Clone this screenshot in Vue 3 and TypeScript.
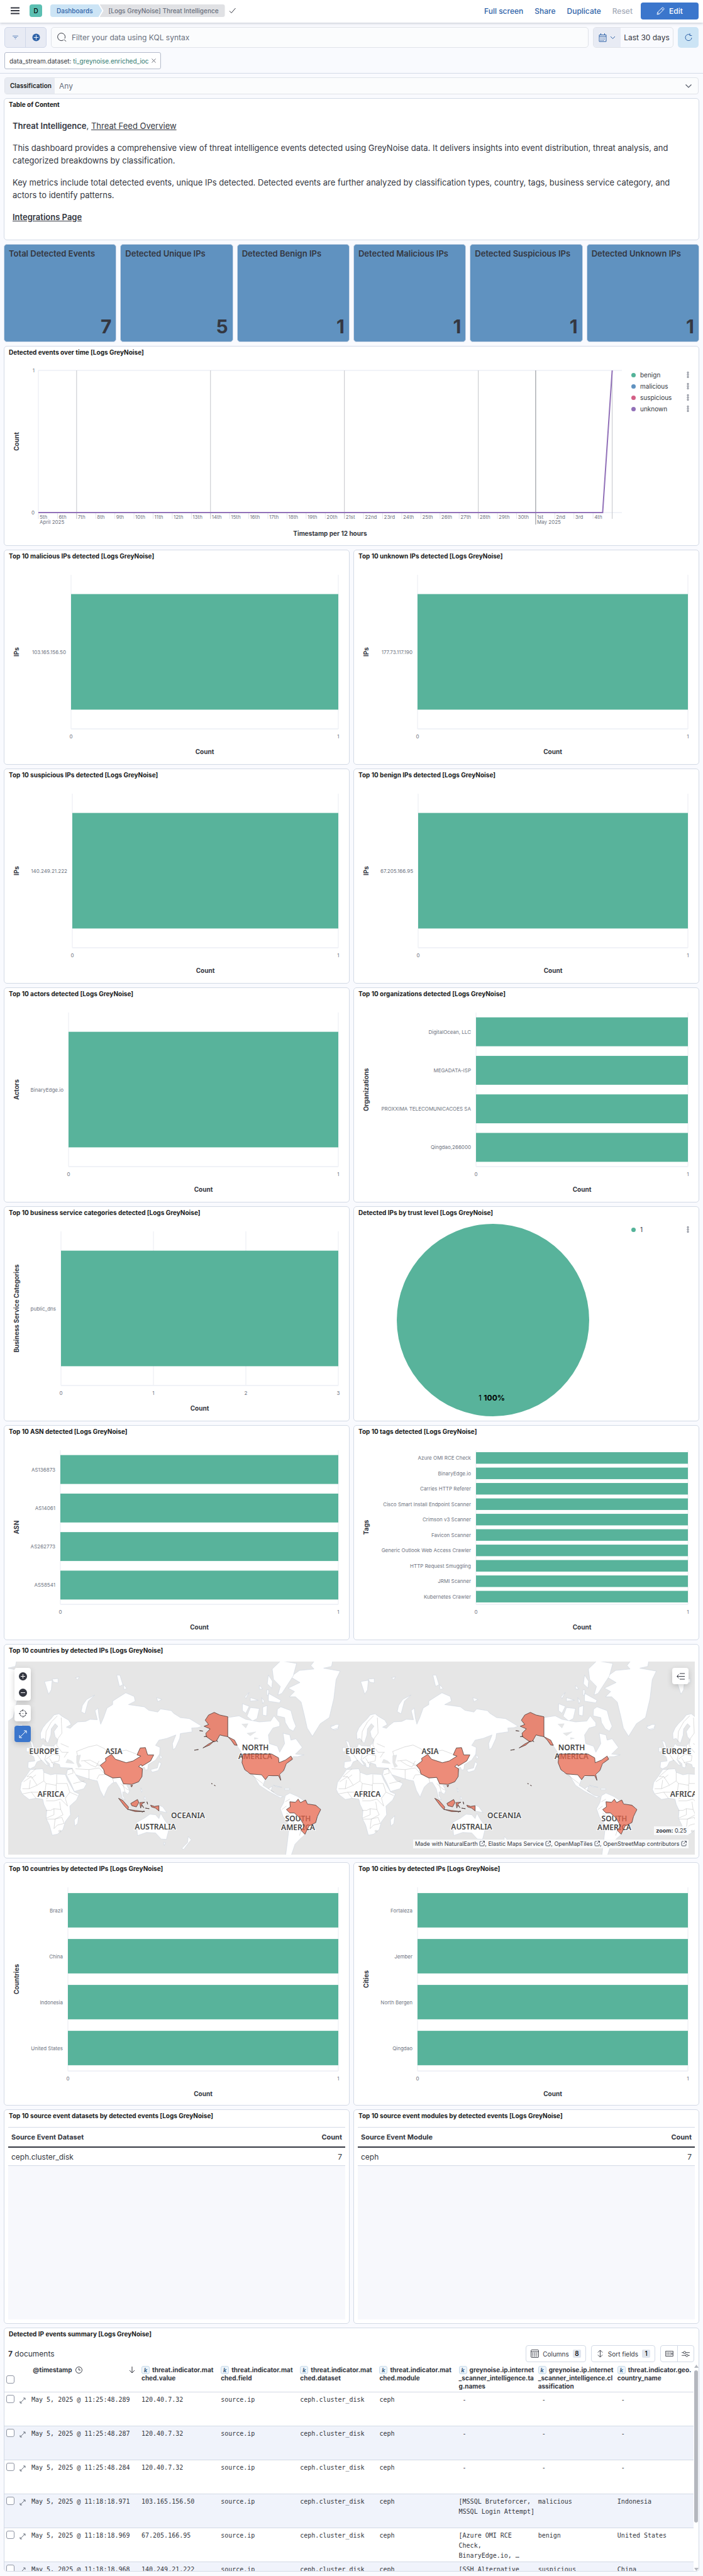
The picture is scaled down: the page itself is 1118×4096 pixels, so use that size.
<script setup lang="ts">
import { ref } from 'vue'

interface Bars {
  kind: 'bars'
  title: string
  axis: string
  left: number
  labels: string[]
  max?: number
  tall?: boolean
}
interface Pie {
  kind: 'pie'
  title: string
}
type Panel = Bars | Pie

const query = ref('')
const classification = ref('Any')

const metrics = [
  { label: 'Total Detected Events', value: 7 },
  { label: 'Detected Unique IPs', value: 5 },
  { label: 'Detected Benign IPs', value: 1 },
  { label: 'Detected Malicious IPs', value: 1 },
  { label: 'Detected Suspicious IPs', value: 1 },
  { label: 'Detected Unknown IPs', value: 1 },
]

const series = [
  { name: 'benign', color: '#54b399' },
  { name: 'malicious', color: '#6092c0' },
  { name: 'suspicious', color: '#d36086' },
  { name: 'unknown', color: '#9170b8' },
]

const suffix = (d: number) => {
  if (d % 10 === 1 && d !== 11) return `${d}st`
  if (d % 10 === 2 && d !== 12) return `${d}nd`
  if (d % 10 === 3 && d !== 13) return `${d}rd`
  return `${d}th`
}
const dayWidth = 30.42
const days = Array.from({ length: 30 }, (_, i) => ({
  x: 55 + i * dayWidth,
  label: suffix(i < 26 ? i + 5 : i - 25),
}))
const weeks = [2, 9, 16, 23].map((i) => 55 + i * dayWidth)
const monthX = 55 + 26 * dayWidth
const endX = 55 + 30 * dayWidth

const upperPanels: Panel[] = [
  { kind: 'bars', title: 'Top 10 malicious IPs detected [Logs GreyNoise]', axis: 'IPs', left: 107, labels: ['103.165.156.50'] },
  { kind: 'bars', title: 'Top 10 unknown IPs detected [Logs GreyNoise]', axis: 'IPs', left: 102, labels: ['177.73.117.190'] },
  { kind: 'bars', title: 'Top 10 suspicious IPs detected [Logs GreyNoise]', axis: 'IPs', left: 109, labels: ['140.249.21.222'] },
  { kind: 'bars', title: 'Top 10 benign IPs detected [Logs GreyNoise]', axis: 'IPs', left: 103, labels: ['67.205.166.95'] },
  { kind: 'bars', title: 'Top 10 actors detected [Logs GreyNoise]', axis: 'Actors', left: 103, labels: ['BinaryEdge.io'] },
  {
    kind: 'bars', title: 'Top 10 organizations detected [Logs GreyNoise]', axis: 'Organizations', left: 195,
    labels: ['DigitalOcean, LLC', 'MEGADATA-ISP', 'PROXXIMA TELECOMUNICACOES SA', 'Qingdao,266000'],
  },
  { kind: 'bars', title: 'Top 10 business service categories detected [Logs GreyNoise]', axis: 'Business Service Categories', left: 91, labels: ['public_dns'], max: 3 },
  { kind: 'pie', title: 'Detected IPs by trust level [Logs GreyNoise]' },
  { kind: 'bars', title: 'Top 10 ASN detected [Logs GreyNoise]', axis: 'ASN', left: 90, labels: ['AS136873', 'AS14061', 'AS262773', 'AS58541'] },
  {
    kind: 'bars', title: 'Top 10 tags detected [Logs GreyNoise]', axis: 'Tags', left: 195,
    labels: ['Azure OMI RCE Check', 'BinaryEdge.io', 'Carries HTTP Referer', 'Cisco Smart Install Endpoint Scanner', 'Crimson v3 Scanner', 'Favicon Scanner', 'Generic Outlook Web Access Crawler', 'HTTP Request Smuggling', 'JRMI Scanner', 'Kubernetes Crawler'],
  },
]
const placePanels: Bars[] = [
  { kind: 'bars', title: 'Top 10 countries by detected IPs [Logs GreyNoise]', axis: 'Countries', left: 102, labels: ['Brazil', 'China', 'Indonesia', 'United States'], tall: true },
  { kind: 'bars', title: 'Top 10 cities by detected IPs [Logs GreyNoise]', axis: 'Cities', left: 102, labels: ['Fortaleza', 'Jember', 'North Bergen', 'Qingdao'], tall: true },
]
const groups: Panel[][] = [upperPanels, placePanels]

const plotTop = 40
const plotRight = 532
const plotBottom = (p: Bars) => (p.tall ? 332 : 285)
const band = (p: Bars) => (plotBottom(p) - plotTop) / p.labels.length
const midY = (p: Bars) => (plotTop + plotBottom(p)) / 2
const ticks = (p: Bars) => {
  const max = p.max ?? 1
  return Array.from({ length: max + 1 }, (_, i) => ({ value: i, x: p.left + ((plotRight - p.left) * i) / max }))
}

const mapWidth = 1092
const worldCopies = [-1401, 0, 1401, 2802]
const labelCopies = [-503, 0, 503, 1006]
const places = [
  { x: 57, y: 142, name: 'EUROPE' },
  { x: 168, y: 142, name: 'ASIA' },
  { x: 68, y: 210, name: 'AFRICA' },
  { x: 393, y: 136, name: 'NORTH' },
  { x: 393, y: 150, name: 'AMERICA' },
  { x: 286, y: 244, name: 'OCEANIA' },
  { x: 234, y: 262, name: 'AUSTRALIA' },
  { x: 461, y: 249, name: 'SOUTH' },
  { x: 461, y: 263, name: 'AMERICA' },
]
const mapLabels = labelCopies
  .flatMap((dx) => places.map((p) => ({ ...p, x: p.x + dx })))
  .filter((p) => p.x > 0 && p.x < mapWidth)
const credits = ['Made with NaturalEarth', 'Elastic Maps Service', 'OpenMapTiles', 'OpenStreetMap contributors']

const sources = [
  { title: 'Top 10 source event datasets by detected events [Logs GreyNoise]', head: 'Source Event Dataset', name: 'ceph.cluster_disk' },
  { title: 'Top 10 source event modules by detected events [Logs GreyNoise]', head: 'Source Event Module', name: 'ceph' },
]

const columns = [
  ['threat.indicator.mat', 'ched.value'],
  ['threat.indicator.mat', 'ched.field'],
  ['threat.indicator.mat', 'ched.dataset'],
  ['threat.indicator.mat', 'ched.module'],
  ['greynoise.ip.internet', '_scanner_intelligence.ta', 'g.names'],
  ['greynoise.ip.internet', '_scanner_intelligence.cl', 'assification'],
  ['threat.indicator.geo.', 'country_name'],
]
const dash = '\u00a0-'
const events = [
  { time: '11:25:48.289', ip: '120.40.7.32', tags: dash, kind: dash, country: dash },
  { time: '11:25:48.287', ip: '120.40.7.32', tags: dash, kind: dash, country: dash },
  { time: '11:25:48.284', ip: '120.40.7.32', tags: dash, kind: dash, country: dash },
  { time: '11:18:18.971', ip: '103.165.156.50', tags: '[MSSQL Bruteforcer,\nMSSQL Login Attempt]', kind: 'malicious', country: 'Indonesia' },
  { time: '11:18:18.969', ip: '67.205.166.95', tags: '[Azure OMI RCE\nCheck,\nBinaryEdge.io, …', kind: 'benign', country: 'United States' },
  { time: '11:18:18.968', ip: '140.249.21.222', tags: '[SSH Alternative', kind: 'suspicious', country: 'China' },
]
</script>

<template>
  <div class="page">
    <header class="top">
      <button class="icon-btn" aria-label="Menu">
        <svg width="14" height="12" viewBox="0 0 14 12"><path d="M0 1.5h14M0 6h14M0 10.5h14" stroke="#343741" stroke-width="1.8" /></svg>
      </button>
      <span class="space">D</span>
      <nav class="crumbs">
        <a href="#" class="crumb first">Dashboards</a>
        <span class="crumb last">[Logs GreyNoise] Threat Intelligence</span>
      </nav>
      <svg class="check" width="12" height="12" viewBox="0 0 12 12"><path d="M1 6.5 4 9.5 10.5 2" fill="none" stroke="#343741" /></svg>
      <div class="actions">
        <a href="#">Full screen</a>
        <a href="#">Share</a>
        <a href="#">Duplicate</a>
        <button class="reset" disabled>Reset</button>
        <button class="edit">
          <svg width="13" height="13" viewBox="0 0 13 13"><path d="M1 12l.8-3.4L9.2 1.2a1 1 0 0 1 1.4 0l1.2 1.2a1 1 0 0 1 0 1.4L4.4 11.2zM8 2.5 10.5 5M2 8.6l2.4 2.4" fill="none" stroke="#fff" /></svg>
          Edit
        </button>
      </div>
    </header>

    <section class="query">
      <div class="query-row">
        <div class="filter-group">
          <button aria-label="Filter menu"><svg width="9" height="7" viewBox="0 0 12 8"><path d="M0 1h12M3 4h6M5 7h2" stroke="#2f63a8" /></svg></button>
          <button aria-label="Add filter"><svg width="13" height="13" viewBox="0 0 14 14"><circle cx="7" cy="7" r="6.5" fill="#2f63a8" /><path d="M3 7h8M7 3v8" stroke="#fff" /></svg></button>
        </div>
        <label class="search">
          <svg width="15" height="15" viewBox="0 0 15 15"><path d="M10 11.6A6 6 0 1 1 12 9.3M11 10.8l3 3" fill="none" stroke="#343741" /></svg>
          <input v-model="query" type="text" aria-label="KQL query" placeholder="Filter your data using KQL syntax" />
        </label>
        <div class="dates">
          <button class="quick" aria-label="Date quick select">
            <svg width="13" height="14" viewBox="0 0 13 14" fill="none" stroke="#2f63a8"><path d="M1 2.5h11v10.5H1zM1 5h11M3.5 0v3M9.500 0v3" /><path d="M3 7.500h7M3 9.500h7M3 11.500h5" stroke-dasharray="1 1" /></svg>
            <svg width="9" height="6" viewBox="0 0 9 6"><path d="M1 1l3.500 3.500L8 1" fill="none" stroke="#2f63a8" /></svg>
          </button>
          <button class="range">Last 30 days</button>
        </div>
        <button class="refresh" aria-label="Refresh"><svg width="12" height="13" viewBox="0 0 12 13"><path d="M8.500 2.300A5 5 0 1 0 11 7M8 .2v3.300h3.300" fill="none" stroke="#2f63a8" /></svg></button>
      </div>
      <div class="pill">
        <span>data_stream.dataset: <b>ti_greynoise.enriched_ioc</b></span>
        <button class="icon-btn" aria-label="Remove filter"><svg width="7" height="7" viewBox="0 0 8 8"><path d="M.5.5l7 7M7.500.5l-7 7" stroke="#535966" /></svg></button>
      </div>
    </section>

    <main class="board">
      <div class="control">
        <label for="classification">Classification</label>
        <select id="classification" v-model="classification"><option>Any</option></select>
        <svg width="12" height="8" viewBox="0 0 12 8"><path d="M1.500 1.500 6 6l4.500-4.500" fill="none" stroke="#535966" stroke-width="1.200" /></svg>
      </div>

      <section class="panel intro">
        <h2>Table of Content</h2>
        <div class="markdown">
          <p><strong>Threat Intelligence</strong>, <a href="#">Threat Feed Overview</a></p>
          <p>This dashboard provides a comprehensive view of threat intelligence events detected using GreyNoise data. It delivers insights into event distribution, threat analysis, and categorized breakdowns by classification.</p>
          <p>Key metrics include total detected events, unique IPs detected. Detected events are further analyzed by classification types, country, tags, business service category, and actors to identify patterns.</p>
          <p><a href="#"><strong>Integrations Page</strong></a></p>
        </div>
      </section>

      <div class="metrics">
        <section v-for="m in metrics" :key="m.label" class="metric">
          <h3>{{ m.label }}</h3>
          <span>{{ m.value }}</span>
        </section>
      </div>

      <section class="panel timeline">
        <h2>Detected events over time [Logs GreyNoise]</h2>
        <div class="split">
          <svg class="chart" viewBox="1 28 990 289">
            <path d="M55 39H983M55 265H983" stroke="#f1f3f8" stroke-width="2" />
            <path d="M55 39V265" stroke="#e6e9f1" />
            <path v-for="d in days" :key="d.x" :d="`M${d.x} 265v10`" stroke="#e1e4ec" />
            <path v-for="w in weeks" :key="w" :d="`M${w} 39V275`" stroke="#c3c5ca" />
            <path :d="`M${monthX} 39V284`" stroke="#84878f" />
            <path :d="`M${endX} 39V275`" stroke="#c3c5ca" />
            <path :d="`M55 265H${endX - dayWidth / 2}L${endX} 39`" fill="none" stroke="#9170b8" stroke-width="2" />
            <g class="tick">
              <text x="49" y="39" text-anchor="end">1</text>
              <text x="49" y="265" text-anchor="end">0</text>
              <text v-for="d in days" :key="d.label" :x="d.x + 2" y="272">{{ d.label }}</text>
              <text x="57" y="280">April 2025</text>
              <text :x="monthX + 2" y="280">May 2025</text>
            </g>
            <text class="axis" x="519" y="298">Timestamp per 12 hours</text>
            <text class="axis" transform="translate(20 152) rotate(-90)">Count</text>
          </svg>
          <ul class="legend">
            <li v-for="s in series" :key="s.name">
              <i :style="{ background: s.color }"></i><span>{{ s.name }}</span>
              <button class="icon-btn" :aria-label="`Options for ${s.name}`"><svg width="4" height="10" viewBox="0 0 4 10"><path d="M1 .5h2v2H1zM1 4h2v2H1zM1 7.500h2v2H1z" fill="none" stroke="#69707d" stroke-width=".8" /></svg></button>
            </li>
          </ul>
        </div>
      </section>

      <template v-for="(group, g) in groups" :key="g">
        <section v-if="g === 1" class="panel map-panel">
          <h2>Top 10 countries by detected IPs [Logs GreyNoise]</h2>
          <div class="map">
            <svg :viewBox="`0 0 ${mapWidth} 307`">
              <defs>
                <g id="land" stroke-linejoin="round">
                  <g fill="#fff" stroke="#ccd4df" stroke-width="2">
                    <path d="M180 530 190 500 205 475 225 450 240 425 262 418 275 432 305 455 316 480 295 495 312 502 325 485 345 465 380 462 400 450 432 452 422 400 435 385 440 440 447 478 460 440 475 385 500 365 500 345 530 320 558 297 595 318 600 345 570 365 640 378 660 398 700 408 712 390 760 400 770 415 800 440 840 446 868 468 895 490 878 498 850 500 852 522 800 532 797 560 778 615 768 625 765 590 780 540 740 560 705 570 690 600 710 612 708 650 690 685 658 710 655 740 645 742 640 725 625 735 632 775 615 808 585 828 562 830 576 860 568 882 555 870 545 868 545 890 556 915 543 905 533 850 515 812 498 818 480 840 465 885 462 900 445 860 432 805 412 800 385 790 350 775 335 768 355 802 385 820 372 850 330 866 315 820 295 770 300 740 322 732 300 730 268 728 264 710 240 700 235 730 222 725 220 705 198 680 216 718 205 712 185 685 165 695 155 722 135 735 124 728 126 695 155 690 150 665 135 655 165 640 180 615 190 590 200 602 235 605 250 590 255 565 245 550 240 520 257 490 245 475 228 505 226 540 214 588 204 575 195 560 181 565Z" />
                    <path d="M135 740 190 735 195 755 225 770 245 765 290 768 300 800 330 868 352 880 340 915 310 950 313 1000 290 1040 280 1085 255 1112 232 1118 220 1060 205 1020 208 975 195 940 190 910 160 905 130 912 100 882 90 855 95 815 115 780Z" />
                    <path d="M330 1030 349 1006 345 1050 332 1065ZM132 572 145 580 158 640 135 650 142 610ZM118 612h12v25h-12ZM88 480h14l-5 20-22 8-12-12ZM1467 485 1500 488 1500 505 1480 512Z" />
                    <path d="M1278 270 1330 238 1288 205 1328 168 1392 160 1378 140 1395 112H1475L1470 145 1435 155 1508 172 1490 220 1480 330 1460 440 1420 475 1385 548 1362 500 1350 430 1335 350 1310 320 1283 320 1306 290Z" />
                    <path d="M1245 112 1315 128 1300 200 1250 300 1232 310 1243 260 1213 220 1207 160ZM1190 195 1208 230 1205 270 1185 245ZM1075 360 1105 375 1090 415 1075 400ZM1110 382 1150 388 1140 445 1120 460 1095 432ZM1165 380 1185 370 1182 430 1165 425ZM1190 300 1245 340 1240 355 1190 345ZM1105 295 1090 330 1086 320ZM1110 325 1145 340 1110 345ZM1160 325 1172 345 1165 360ZM1150 255 1165 275 1150 275ZM1183 280h8v30h-8ZM1245 378 1290 400 1300 450 1312 490 1300 518 1282 505 1265 468 1262 440 1228 430 1230 392Z" />
                    <path d="M1010 440 1060 430 1090 450 1150 465 1200 460 1215 430 1240 470 1240 490 1210 500 1190 540 1195 590 1230 605 1240 640 1262 590 1255 530 1285 540 1290 570 1312 562 1340 612 1310 650 1348 655 1320 665 1300 665 1280 692 1262 740 1246 770 1245 802 1232 775 1180 785 1166 830 1190 850 1208 835 1202 862 1232 888 1256 895 1243 902 1190 865 1150 830 1120 765 1095 760 1075 710 1075 650 1050 600 1010 550ZM1212 830 1250 842 1225 838ZM1262 848h22v8h-22Z" />
                    <path d="M1265 890 1285 875 1320 895 1360 930 1420 960 1420 985 1405 1020 1395 1050 1352 1115 1330 1140 1308 1170 1290 1240H1266L1275 1150 1283 1060 1255 1010 1243 965 1258 930Z" />
                    <path d="M605 1045 640 1020 665 997 690 1000 705 1022 713 992 730 1030 752 1070 738 1142 715 1140 690 1105 650 1102 610 1120ZM725 1160h8l-4 18ZM835 1125 848 1145 835 1165 815 1200 806 1195 832 1160ZM705 945 722 955 740 988 705 978Z" />
                    <path d="M708 655 720 668 712 680ZM705 695 715 705 702 745 675 755 668 740 698 730ZM625 845 632 860 628 870ZM640 895 648 905 640 915ZM360 405 366 370 385 335 421 310 392 345 377 418ZM198 232 232 225 228 280 216 305ZM232 218 258 215 258 240 238 235ZM518 195 532 195 545 250 530 260ZM548 250 563 272 550 278ZM695 325 718 335 700 348ZM335 210 352 205 345 222Z" />
                  </g>
                  <g fill="#e6e6e6" stroke="#ccd4df">
                    <path d="M292 700 300 680 318 690 330 705ZM340 660 358 655 350 700 362 720 348 728 340 700ZM1072 478 1100 475 1090 500ZM1095 530 1135 522 1110 545ZM1128 555 1145 560 1128 565Z" />
                  </g>
                  <path fill="none" stroke="#b5b5b5" stroke-width="1.500" d="M202 580 205 520 228 465 255 430M272 440 275 530 258 560M258 560 252 600 275 640 305 640M185 640 205 650 200 680M160 640 185 690M205 650 240 625 240 600M205 680 235 650 265 660 262 690 228 700M240 625 265 650M220 675 240 715M300 640 285 670M340 635 345 660M340 635 390 610 430 598 465 620 475 640 495 652 530 635 560 628 605 650M360 690 400 685 445 715M375 690 405 715 425 725 440 690M430 715 445 720M395 740 440 730 465 765M335 735 395 740 395 795M430 795 440 770 470 768 500 790 535 785M500 790 505 815M535 820 560 850 575 860M320 732 335 765M300 770 325 760 320 735M325 820 375 805M300 740 320 735M120 780 160 735M105 810 140 780 165 830 195 805 195 755M140 780 120 780M252 768V820H298M195 805 205 820 250 830M100 850 130 850 135 800M130 850 165 830M100 880 140 870 160 905M140 870 195 870 200 900M250 820 250 860 205 910M205 820 200 870M250 860 290 900M298 820 310 870 345 890M310 870 290 905 300 950M205 920 240 920 270 910 300 950M205 975 225 975 240 965 240 1000 205 1020M240 965 270 970 265 925M270 970 280 1000 245 1025 240 1080M208 1025 245 1025M245 1025 275 1015 285 1050 255 1060 240 1080M262 1090h8v8h-8ZM160 770 140 790M1110 765 1165 820M1190 850 1215 870M1265 925 1285 910M1250 970 1270 950M1270 990 1310 1030 1300 1050 1330 1080M1283 1060 1290 1050M1335 1090 1328 1120M545 820 555 870M270 590 305 610" />
                </g>
                <g id="matches" fill="#e7664c" fill-opacity=".75" stroke="#4d3a36" stroke-width="2.500" stroke-linejoin="round">
                  <path d="M950 410 975 425 1010 435V550L990 545 975 540 960 575 948 580 915 550 913 530 932 505 905 490 925 480 910 455 925 425Z" />
                  <path d="M950 575 930 598 900 615 925 592ZM885 515 900 518ZM862 628 880 624ZM905 550 918 548ZM1010 550 1040 570 1052 600 1040 598 1025 570ZM960 570 965 580ZM950 828 955 835ZM937 820 942 822Z" />
                  <path d="M445 715 470 690 468 675 495 652 512 680 560 700 590 690 625 662 608 655 622 615 645 613 655 655 682 655 668 690 630 720 626 710 615 722 632 735 630 780 615 810 585 825 548 822 535 785 500 788 465 765 460 740ZM580 832 588 830 584 840Z" />
                  <path d="M1077 650H1205L1235 672 1237 700 1265 685 1290 662 1297 680 1270 705 1258 745 1240 768 1245 802 1235 775 1190 775 1177 798 1160 770 1110 765 1085 740 1073 700Z" />
                  <path d="M1285 925 1310 928 1322 910 1332 930 1355 915 1363 938 1400 945 1422 970 1407 1010 1400 1045 1370 1065 1352 1113 1335 1090 1350 1065 1330 1020 1305 990 1285 990 1270 970 1287 955Z" />
                  <path d="M526 905 545 918 570 955 568 972 552 950ZM570 970 600 975 642 982 600 982ZM580 935 610 912 616 930 605 955 585 948ZM620 930 642 928 628 938 638 960 628 945 624 962ZM668 945 685 952 705 948V978L690 962 672 955ZM652 925 655 940ZM645 962 662 965ZM630 985 640 978Z" />
                </g>
              </defs>
              <rect :width="mapWidth" height="308" fill="#e6e6e6" />
              <g transform="scale(.3589 .2758) translate(-37 -117)">
                <use v-for="c in worldCopies" :key="c" href="#land" :x="c" />
              </g>
              <g class="place">
                <text v-for="(p, i) in mapLabels" :key="i" :x="p.x" :y="p.y">{{ p.name }}</text>
              </g>
              <g transform="scale(.3589 .2758) translate(-37 -117)">
                <use v-for="c in worldCopies" :key="c" href="#matches" :x="c" />
              </g>
            </svg>
            <div class="map-tools">
              <div class="tool-card">
                <button aria-label="Zoom in"><svg width="13" height="13" viewBox="0 0 13 13"><circle cx="6.500" cy="6.500" r="6.500" fill="#343741" /><path d="M3 6.500h7M6.500 3v7" stroke="#fff" /></svg></button>
                <button aria-label="Zoom out"><svg width="13" height="13" viewBox="0 0 13 13"><circle cx="6.500" cy="6.500" r="6.500" fill="#343741" /><path d="M3 6.500h7" stroke="#fff" /></svg></button>
              </div>
              <div class="tool-card">
                <button aria-label="Fit to data"><svg width="13" height="13" viewBox="0 0 13 13"><circle cx="6.500" cy="6.500" r="5" fill="none" stroke="#343741" stroke-dasharray="5 2.850" stroke-dashoffset="-1.500" /><path d="M6.500 0v3M6.500 10v3M0 6.500h3M10 6.500h3M6 6.500h1" stroke="#343741" /></svg></button>
              </div>
              <div class="tool-card primary">
                <button aria-label="Tools"><svg width="13" height="13" viewBox="0 0 13 13"><path d="M1 12 12 1M8 1h4v4M1 8v4h4" fill="none" stroke="#fff" /></svg></button>
              </div>
            </div>
            <div class="tool-card layers">
              <button aria-label="Expand layers panel"><svg width="13" height="11" viewBox="0 0 13 11"><path d="M5 1h8M1 5.500h12M5 10h8M3.500 2.500l-3 3 3 3" fill="none" stroke="#343741" /></svg></button>
            </div>
            <div class="map-notes">
              <span class="zoom"><strong>zoom:</strong> 0.25</span>
              <span class="credit">
                <template v-for="(c, i) in credits" :key="c"><a href="#">{{ c }} <svg width="9" height="9" viewBox="0 0 9 9"><path d="M4 1H2a1 1 0 0 0-1 1v5a1 1 0 0 0 1 1h5a1 1 0 0 0 1-1V5M5.500.5h3v3M8.500.5 4 5" fill="none" stroke="#535966" /></svg></a><template v-if="i < 3">, </template></template>
              </span>
            </div>
          </div>
        </section>

        <div class="pair">
          <section v-for="p in group" :key="p.title" class="panel">
            <h2>{{ p.title }}</h2>
            <svg v-if="p.kind === 'bars'" class="chart" :viewBox="`1 28 548 ${p.tall ? 358 : 313}`">
              <path v-for="t in ticks(p)" :key="t.value" :d="`M${t.x} ${plotTop}V${plotBottom(p)}`" stroke="#e9ebf2" />
              <path :d="`M${p.left} ${plotBottom(p)}H${plotRight}`" stroke="#f0f2f7" stroke-width="2" />
              <rect
                v-for="(l, i) in p.labels" :key="l" :x="p.left" :y="plotTop + band(p) * (i + 0.125)"
                :width="plotRight - p.left" :height="band(p) * 0.75" fill="#58b39b"
              />
              <g class="tick">
                <text v-for="(l, i) in p.labels" :key="l" :x="p.left - 8" :y="plotTop + band(p) * (i + 0.5)" text-anchor="end">{{ l }}</text>
                <text v-for="t in ticks(p)" :key="t.value" :x="t.x" :y="plotBottom(p) + 12" text-anchor="middle">{{ t.value }}</text>
              </g>
              <text class="axis" :x="(p.left + plotRight) / 2" :y="plotBottom(p) + 36">Count</text>
              <text class="axis" :transform="`translate(20 ${midY(p)}) rotate(-90)`">{{ p.axis }}</text>
            </svg>
            <div v-else class="split">
              <svg class="chart" viewBox="1 28 434 313">
                <circle cx="222" cy="181" r="153" fill="#58b39b" />
                <text class="slice" x="220" y="304">1 <tspan font-weight="700">100%</tspan></text>
              </svg>
              <ul class="legend compact">
                <li>
                  <i></i><span>1</span>
                  <button class="icon-btn" aria-label="Options for 1"><svg width="4" height="10" viewBox="0 0 4 10"><path d="M1 .5h2v2H1zM1 4h2v2H1zM1 7.500h2v2H1z" fill="none" stroke="#69707d" stroke-width=".8" /></svg></button>
                </li>
              </ul>
            </div>
          </section>
        </div>
      </template>

      <div class="pair">
        <section v-for="s in sources" :key="s.head" class="panel source">
          <h2>{{ s.title }}</h2>
          <div class="sheet">
            <table>
              <thead><tr><th>{{ s.head }}</th><th class="num">Count</th></tr></thead>
              <tbody><tr><td>{{ s.name }}</td><td class="num">7</td></tr></tbody>
            </table>
          </div>
        </section>
      </div>

      <section class="panel summary">
        <h2>Detected IP events summary [Logs GreyNoise]</h2>
        <div class="toolbar">
          <p><strong>7</strong> documents</p>
          <button>
            <svg width="13" height="13" viewBox="0 0 14 14" fill="none" stroke="#343741"><rect x=".5" y=".5" width="13" height="13" rx="1.500" /><path d="M0 3.500h14" /><path d="M2 6h10M2 8.500h10M2 11h10" stroke-dasharray="2.500 1" /></svg>
            Columns <em>8</em>
          </button>
          <button>
            <svg width="13" height="13" viewBox="0 0 14 14" fill="none" stroke="#343741"><path d="M7 1.500v11M3 5l4-4 4 4M3 9l4 4 4-4" /></svg>
            Sort fields <em>1</em>
          </button>
          <div class="btn-pair">
            <button aria-label="Keyboard shortcuts"><svg width="13" height="9" viewBox="0 0 14 10" fill="none" stroke="#343741"><path d="M.5.5h13v9H.5z" /><path d="M2 3h8M2 5h8M2 7h8" stroke-dasharray="1 .7" /><path d="M11.500 3v4" stroke-width="1.500" /></svg></button>
            <button aria-label="Display options"><svg width="13" height="10" viewBox="0 0 14 11" fill="none" stroke="#343741"><path d="M0 3h3M7 3h7M0 8h7M11 8h3" /><circle cx="5" cy="3" r="2" /><circle cx="9" cy="8" r="2" /></svg></button>
          </div>
        </div>
        <div class="grid-wrap">
          <table class="grid">
            <colgroup><col class="c-check" /><col class="c-open" /><col class="c-time" /><col v-for="(c, i) in columns" :key="i" /></colgroup>
            <thead>
              <tr>
                <th class="pick"><input type="checkbox" aria-label="Select all rows" /></th>
                <th></th>
                <th>
                  <div class="time-head">
                    @timestamp
                    <svg width="11" height="11" viewBox="0 0 11 11"><circle cx="5.500" cy="5.500" r="5" fill="none" stroke="#343741" /><path d="M5.500 2.500v3h2.500" fill="none" stroke="#343741" /></svg>
                    <svg class="sorted" width="10" height="11" viewBox="0 0 10 11"><path d="M5 0v10M1 6l4 4 4-4" fill="none" stroke="#343741" /></svg>
                  </div>
                </th>
                <th v-for="(c, i) in columns" :key="i"><kbd>k</kbd><template v-for="(line, n) in c" :key="n"><br v-if="n" />{{ line }}</template></th>
              </tr>
            </thead>
            <tbody>
              <tr v-for="e in events" :key="e.time">
                <td class="pick"><input type="checkbox" :aria-label="`Select row ${e.time}`" /></td>
                <td class="open"><button class="icon-btn" aria-label="Open row"><svg width="10" height="10" viewBox="0 0 10 10"><path d="M1 9l8-8M6 1h3v3M1 6v3h3" fill="none" stroke="#69707d" /></svg></button></td>
                <td>May 5, 2025 @ {{ e.time }}</td>
                <td>{{ e.ip }}</td>
                <td>source.ip</td>
                <td>ceph.cluster_disk</td>
                <td>ceph</td>
                <td>{{ e.tags }}</td>
                <td>{{ e.kind }}</td>
                <td>{{ e.country }}</td>
              </tr>
            </tbody>
          </table>
          <div class="scroll"><svg width="7" height="5" viewBox="0 0 7 5"><path d="M0 5 3.500 0 7 5z" fill="#b4b7be" /></svg><i></i><svg class="down" width="7" height="5" viewBox="0 0 7 5"><path d="M0 0 3.500 5 7 0z" fill="#b4b7be" /></svg></div>
        </div>
      </section>
    </main>
  </div>
</template>

<style>
body {
  background: #f9fafe;
}
</style>

<style scoped>
* {
  box-sizing: border-box;
}
.page {
  font-family: Inter, "Noto Sans", sans-serif;
  font-size: 12px;
  color: #343741;
}
button {
  font: inherit;
  color: inherit;
  padding: 0;
  border: 0;
  background: none;
  display: flex;
  align-items: center;
  justify-content: center;
}
a {
  color: inherit;
}
svg {
  display: block;
  flex: none;
}
h2, h3, p, ul {
  margin: 0;
  padding: 0;
}

.top {
  display: flex;
  align-items: center;
  height: 36px;
  padding: 0 7px 2px 17px;
  background: #fff;
  box-shadow: 0 1px 4px rgba(60, 70, 90, 0.3);
}
.space {
  width: 20px;
  height: 20px;
  margin: 0 13px 0 16px;
  border-radius: 4px;
  background: #5bbfb2;
  color: #000;
  font-size: 10px;
  font-weight: 500;
  line-height: 20px;
  text-align: center;
}
.crumbs {
  display: flex;
}
.crumb {
  height: 20px;
  font-size: 10px;
  line-height: 20px;
  font-weight: 500;
  text-decoration: none;
}
.crumb.first {
  padding: 0 15px 0 10px;
  background: #cce4f5;
  color: #2f63a8;
  border-radius: 4px 0 0 4px;
  clip-path: polygon(0 0, calc(100% - 6px) 0, 100% 50%, calc(100% - 6px) 100%, 0 100%);
}
.crumb.last {
  margin-left: -4px;
  padding: 0 10px 0 14px;
  background: #e0e1e4;
  color: #6a707d;
  border-radius: 0 4px 4px 0;
  clip-path: polygon(0 0, 100% 0, 100% 100%, 0 100%, 6px 50%);
}
.check {
  margin-left: 6px;
}
.actions {
  display: flex;
  align-items: center;
  gap: 18px;
  margin-left: auto;
  font-weight: 500;
  color: #2f63a8;
}
.actions a {
  text-decoration: none;
}
.reset {
  color: #a5abb8;
}
.edit {
  gap: 7px;
  width: 92px;
  height: 27px;
  margin-left: -5px;
  border-radius: 4px;
  background: #3b76cc;
  color: #fff;
}

.query {
  padding: 7px 7px 6px;
  border-bottom: 1px solid #d3dae6;
}
.query-row {
  display: flex;
  gap: 7px;
  height: 33px;
}
.filter-group {
  display: flex;
  width: 67px;
  border: 1px solid #d0d7e9;
  border-radius: 5px;
  background: #e8ebf4;
}
.filter-group button {
  flex: 1;
}
.filter-group button + button {
  border-left: 1px solid #d0d7e9;
}
.search {
  display: flex;
  align-items: center;
  flex: 1;
  gap: 8px;
  padding-left: 9px;
  border: 1px solid #e0e3e9;
  border-radius: 5px;
  background: #fbfcfd;
}
.search input {
  flex: 1;
  border: 0;
  padding: 0;
  background: none;
  font: inherit;
}
.search input::placeholder {
  color: #69707d;
  opacity: 1;
}
.dates {
  display: flex;
  width: 128px;
  border: 1px solid #e0e3e9;
  border-radius: 5px;
  overflow: hidden;
}
.quick {
  gap: 5px;
  width: 43px;
  background: #e8ebf4;
}
.range {
  flex: 1;
}
.refresh {
  width: 33px;
  border-radius: 5px;
  background: #cce4f5;
}
.pill {
  display: inline-flex;
  align-items: center;
  gap: 4px;
  height: 27px;
  margin-top: 7px;
  padding: 0 7px;
  border: 1px solid #b3bacb;
  border-radius: 3px;
  background: #fff;
  font-size: 10px;
  vertical-align: top;
}
.pill b {
  font-weight: 400;
  color: #2f7a70;
}

.board {
  display: flex;
  flex-direction: column;
  gap: 6px;
  padding: 6px 6px 7px;
}
.control {
  display: flex;
  align-items: center;
  height: 27px;
  margin: 0 1px;
  padding-right: 9px;
  border: 1px solid #e0e3e9;
  border-radius: 4px;
  background: #fbfcfd;
}
.control label {
  width: 79px;
  padding-left: 8px;
  background: #e8ebf2;
  font-size: 10px;
  font-weight: 600;
  line-height: 25px;
  color: #1a1c21;
}
.control select {
  flex: 1;
  padding: 0 7px;
  border: 0;
  appearance: none;
  background: none;
  font: inherit;
  color: #69707d;
}

.panel {
  border: 1px solid #d3dae6;
  border-radius: 5px;
  background: #fff;
  overflow: hidden;
  min-width: 0;
}
.panel h2 {
  height: 27px;
  padding: 1px 7px;
  font-size: 10px;
  line-height: 16px;
  font-weight: 700;
  color: #1a1c21;
}
.chart {
  width: 100%;
  min-width: 0;
}
.intro {
  height: 226px;
}
.markdown {
  display: flex;
  flex-direction: column;
  gap: 15px;
  padding: 6px 13px;
  font-size: 13px;
  line-height: 20px;
}
.markdown strong {
  font-weight: 600;
}
.metrics {
  display: grid;
  grid-template-columns: repeat(6, minmax(0, 1fr));
  gap: 6px;
}
.metric {
  display: flex;
  flex-direction: column;
  justify-content: space-between;
  height: 156px;
  padding: 6px 7px;
  border: 1px solid #cdd9e8;
  border-radius: 5px;
  background: #6092c0;
}
.metric h3 {
  font-size: 13px;
  line-height: 16px;
  font-weight: 600;
}
.metric span {
  font-size: 30px;
  line-height: 36px;
  font-weight: 700;
  text-align: right;
}
.split {
  display: flex;
  align-items: flex-start;
}
.split .chart {
  flex: 1;
}
.legend {
  width: 114px;
  padding: 9px 15px 0 7px;
  list-style: none;
  font-size: 10px;
}
.legend.compact {
  padding-top: 0;
}
.legend li {
  display: flex;
  align-items: center;
  gap: 7px;
  height: 18px;
}
.legend i {
  width: 7px;
  height: 7px;
  border-radius: 50%;
  background: #54b399;
}
.legend button {
  margin-left: auto;
}
.chart text {
  dominant-baseline: central;
}
.tick text {
  font-size: 8px;
  fill: #6f7582;
}
.axis {
  font-size: 10px;
  font-weight: 700;
  fill: #343741;
  text-anchor: middle;
}
.slice {
  font-size: 12px;
  fill: #000;
  text-anchor: middle;
}
.pair {
  display: grid;
  grid-template-columns: repeat(2, minmax(0, 1fr));
  gap: 6px;
}

.map-panel {
  padding-bottom: 5px;
}
.map {
  position: relative;
  margin: 0 6px;
}
.map > svg {
  width: 100%;
}
.place text {
  font-family: "Noto Sans", sans-serif;
  font-size: 12px;
  font-weight: 600;
  fill: #444;
  stroke: #fff;
  stroke-width: 2px;
  paint-order: stroke;
  text-anchor: middle;
  dominant-baseline: central;
}
.map-tools {
  position: absolute;
  top: 10px;
  left: 10px;
  display: flex;
  flex-direction: column;
  gap: 7px;
}
.tool-card {
  border-radius: 4px;
  background: #fff;
  box-shadow: 0 3px 10px rgba(0, 0, 0, 0.18);
}
.tool-card button {
  width: 26px;
  height: 26px;
}
.tool-card.primary {
  background: #3b76cc;
}
.layers {
  position: absolute;
  top: 10px;
  right: 10px;
}
.map-notes {
  position: absolute;
  right: 10px;
  bottom: 10px;
  display: flex;
  flex-direction: column;
  align-items: flex-end;
  gap: 7px;
  font-size: 9px;
  line-height: 14px;
}
.map-notes > span {
  padding: 0 3px;
  background: rgba(251, 252, 253, 0.9);
}
.map-notes a {
  text-decoration: none;
}
.map-notes svg {
  display: inline-block;
  vertical-align: -1px;
}

.source {
  height: 341px;
}
.sheet {
  height: 306px;
  margin: 0 6px;
  background: #f7f8fc;
}
.sheet table {
  width: 100%;
  border-collapse: separate;
  border-spacing: 0;
  border-top: 1px solid #d3dae6;
  background: #fff;
}
.sheet th,
.sheet td {
  padding: 0 5px;
  text-align: left;
  font-weight: 400;
}
.sheet th {
  height: 32px;
  border-bottom: 2px solid #343741;
  font-size: 11px;
  font-weight: 700;
}
.sheet td {
  height: 29px;
  border-bottom: 1px solid #d3dae6;
}
.sheet .num {
  text-align: right;
}

.summary {
  height: 388px;
}
.toolbar {
  display: flex;
  gap: 8px;
  height: 27px;
  padding: 0 7px 0 6px;
}
.toolbar p {
  margin-right: auto;
  line-height: 27px;
}
.toolbar > button,
.btn-pair {
  border: 1px solid #d3dae6;
  border-radius: 4px;
}
.toolbar > button {
  gap: 6px;
  padding: 0 7px;
  font-size: 10px;
}
.toolbar em {
  width: 13px;
  border-radius: 2px;
  background: #e0e5ee;
  font-style: normal;
  font-size: 10px;
  line-height: 13px;
  font-weight: 500;
  text-align: center;
  color: #000;
}
.btn-pair {
  display: flex;
}
.btn-pair button {
  width: 26px;
}
.btn-pair button + button {
  border-left: 1px solid #d3dae6;
}
.grid-wrap {
  display: flex;
  height: 332px;
  margin-top: 4px;
  overflow: hidden;
}
.grid {
  flex: 1;
  table-layout: fixed;
  border-collapse: separate;
  border-spacing: 0;
  width: 0;
}
.c-check {
  width: 24px;
}
.c-open {
  width: 14px;
}
.c-time {
  width: 175px;
}
.grid th,
.grid td {
  padding: 0 0 0 5px;
  border-bottom: 1px solid #d3dae6;
  text-align: left;
  vertical-align: top;
  white-space: pre;
}
.grid th {
  height: 44px;
  padding-top: 2px;
  font-size: 10px;
  line-height: 13px;
  font-weight: 700;
}
.grid td {
  height: 54px;
  padding-top: 4px;
  font-family: "DejaVu Sans Mono", monospace;
  font-size: 10px;
  line-height: 16px;
}
.grid tbody tr:nth-child(even) {
  background: #f0f3fb;
}
.grid .pick {
  padding-left: 3px;
}
.grid th.pick {
  vertical-align: middle;
  padding-top: 4px;
}
.grid input {
  display: block;
  width: 13px;
  height: 13px;
  margin: 0;
  appearance: none;
  border: 1px solid #8f95a3;
  border-radius: 3px;
  background: #fff;
}
.grid .open {
  padding: 8px 0 0;
}
.time-head {
  display: flex;
  align-items: center;
  gap: 3px;
  padding-right: 5px;
}
.sorted {
  margin-left: auto;
}
kbd {
  display: inline-block;
  width: 13px;
  height: 13px;
  margin-right: 4px;
  border: 1px solid #c6daea;
  border-radius: 3px;
  background: #edf4fa;
  color: #3d6385;
  font: italic 700 9px/11px Inter, sans-serif;
  text-align: center;
}
.scroll {
  display: flex;
  flex-direction: column;
  align-items: center;
  width: 8px;
  padding: 0 0 4px;
}
.scroll i {
  width: 6px;
  height: 242px;
  margin-top: 4px;
  border-radius: 3px;
  background: #b4b7be;
}
.scroll .down {
  margin-top: auto;
}
</style>
